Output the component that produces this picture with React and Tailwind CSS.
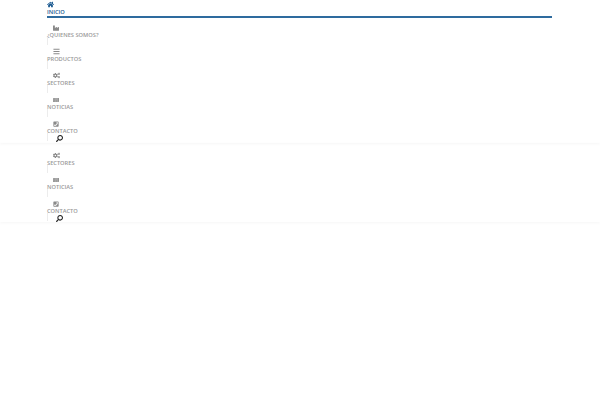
import { FaHome, FaIndustry, FaBars, FaCogs, FaNewspaper, FaPhoneSquare, FaSearch } from "react-icons/fa";

function Item({ Icon, label, size = 6 }) {
  return (
    <div className="h-[24px] relative">
      <div className="h-[9px] flex items-center pl-[6px]">
        <Icon size={size} color="#8a8a8a" />
      </div>
      <div className="text-[5.7px] leading-[10px] -mt-[2px] font-semibold whitespace-nowrap uppercase text-[#999999]">
        {label}
      </div>
      <div className="absolute left-0 top-[14px] w-px h-[8px] bg-[#ececec]" />
    </div>
  );
}

function Search() {
  return (
    <div className="h-[8px] pl-[9px] flex items-center">
      <FaSearch size={7} color="#222222" style={{ transform: "scaleX(-1)" }} />
    </div>
  );
}

const tail = [
  [FaCogs, "Sectores", 7],
  [FaNewspaper, "Noticias", 6],
  [FaPhoneSquare, "Contacto", 6],
];

export default function App() {
  return (
    <div className="w-[600px] h-[400px] bg-white overflow-hidden" style={{ fontFamily: '"Open Sans", sans-serif' }}>
      <div className="h-[143px] shadow-[0_1px_3px_rgba(0,0,0,0.04)] relative">
        <div className="w-[505px] ml-[47px]">
          <div className="h-[18px] border-b-2 border-[#2e6b9e]">
            <div className="h-[8px] flex items-center"><FaHome size={7} color="#17578f" /></div>
            <div className="text-[5.7px] leading-[8px] font-semibold uppercase text-[#17578f]">Inicio</div>
          </div>
          <div className="pt-[5px]">
            <Item Icon={FaIndustry} label="¿Quienes somos?" />
            <Item Icon={FaBars} label="Productos" size={7} />
            {tail.map(([I, l, s]) => <Item key={l} Icon={I} label={l} size={s} />)}
            <div className="-mt-[9px]"><Search /></div>
          </div>
        </div>
      </div>
      <div className="h-[79px] shadow-[0_1px_3px_rgba(0,0,0,0.04)] relative">
        <div className="w-[505px] ml-[47px] pt-[8px]">
          {tail.map(([I, l, s]) => <Item key={l} Icon={I} label={l} size={s} />)}
          <div className="-mt-[9px]"><Search /></div>
        </div>
      </div>
    </div>
  );
}
